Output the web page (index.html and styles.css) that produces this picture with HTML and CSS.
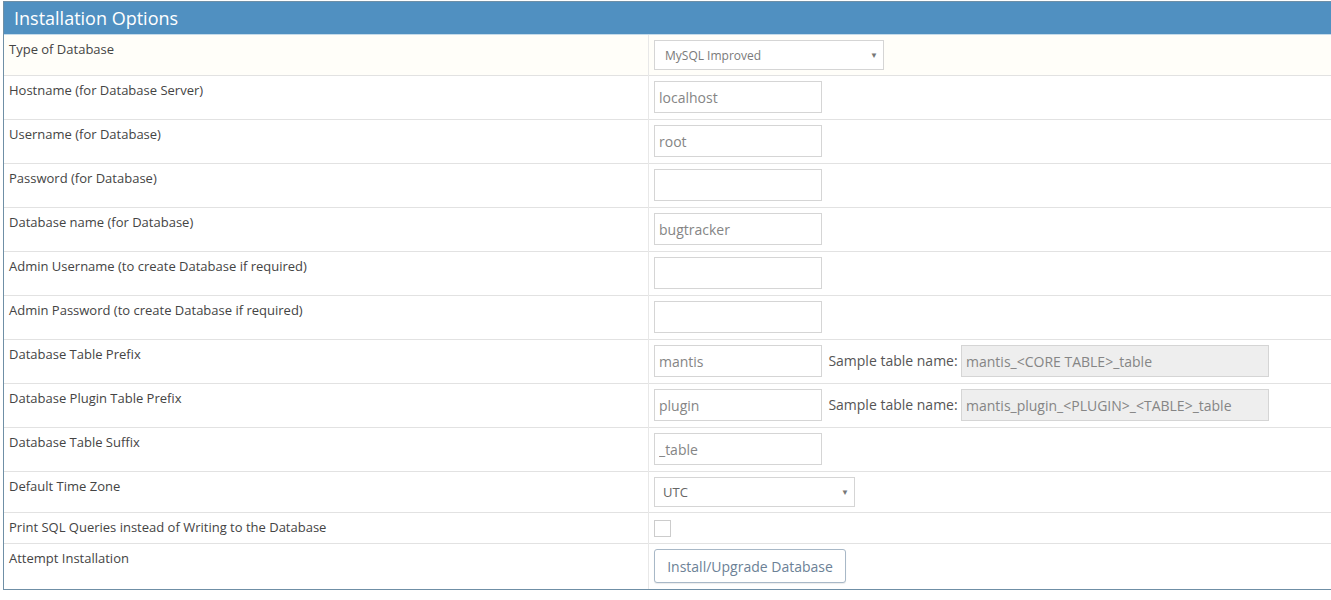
FILE: index.html
```html
<!DOCTYPE html>
<html>
<head>
<meta charset="UTF-8">
<title>Installation Options</title>
<link rel="stylesheet" href="styles.css">
</head>
<body>

<div class="widget-box">
	<div class="widget-header">
		<h4>Installation Options</h4>
	</div>
	<table class="options">
		<tr class="first">
			<td class="label">Type of Database</td>
			<td>
				<span class="select-wrap db-type">
					<select>
						<option>MySQL Improved</option>
					</select>
				</span>
			</td>
		</tr>
		<tr>
			<td class="label">Hostname (for Database Server)</td>
			<td><input type="text" value="localhost"></td>
		</tr>
		<tr>
			<td class="label">Username (for Database)</td>
			<td><input type="text" value="root"></td>
		</tr>
		<tr>
			<td class="label">Password (for Database)</td>
			<td><input type="password" value=""></td>
		</tr>
		<tr>
			<td class="label">Database name (for Database)</td>
			<td><input type="text" value="bugtracker"></td>
		</tr>
		<tr>
			<td class="label">Admin Username (to create Database if required)</td>
			<td><input type="text" value=""></td>
		</tr>
		<tr>
			<td class="label">Admin Password (to create Database if required)</td>
			<td><input type="password" value=""></td>
		</tr>
		<tr>
			<td class="label">Database Table Prefix</td>
			<td>
				<input type="text" value="mantis">
				<span class="sample">Sample table name:</span>
				<input type="text" class="sample-name" value="mantis_<CORE TABLE>_table" readonly>
			</td>
		</tr>
		<tr>
			<td class="label">Database Plugin Table Prefix</td>
			<td>
				<input type="text" value="plugin">
				<span class="sample">Sample table name:</span>
				<input type="text" class="sample-name" value="mantis_plugin_<PLUGIN>_<TABLE>_table" readonly>
			</td>
		</tr>
		<tr>
			<td class="label">Database Table Suffix</td>
			<td><input type="text" value="_table"></td>
		</tr>
		<tr class="select-row">
			<td class="label">Default Time Zone</td>
			<td>
				<span class="select-wrap timezone">
					<select>
						<option>UTC</option>
					</select>
				</span>
			</td>
		</tr>
		<tr class="check-row">
			<td class="label">Print SQL Queries instead of Writing to the Database</td>
			<td><span class="checkbox"></span></td>
		</tr>
		<tr class="last">
			<td class="label">Attempt Installation</td>
			<td><button type="button" class="btn">Install/Upgrade Database</button></td>
		</tr>
	</table>
</div>

</body>
</html>
```

FILE: styles.css
```css
html, body {
	background: #FFF;
	margin: 0;
	overflow: hidden;
	padding: 0;
}
body {
	color: #393939;
	font-family: "Open Sans", "Liberation Sans", sans-serif;
	font-size: 13px;
	padding: 1px 0 0 3px;
}
.widget-box {
	border: 1px solid #6f8fa6;
	border-right: none;
	margin-right: -20px;
}
.widget-header {
	background: #5090C1;
	border-bottom: 1px solid #c5dbea;
	height: 32px;
}
.widget-header h4 {
	color: #FFF;
	font-size: 18px;
	font-weight: normal;
	line-height: 32px;
	margin: 0;
	padding-left: 10px;
}
.options {
	border-collapse: collapse;
	width: 100%;
}
.options td {
	border-top: 1px solid #e2e2e2;
	line-height: 18px;
	padding: 5px 6px 6px 5px;
	vertical-align: top;
}
.options tr.first td {
	background: #fffef9;
	border-top: none;
	padding-bottom: 5px;
}
.options td.label {
	border-right: 1px solid #e8e8e8;
	color: #444;
	width: 633px;
}
.options tr.select-row td, .options tr.check-row td {
	padding-bottom: 5px;
}
input[type=text], input[type=password] {
	border: 1px solid #d5d5d5;
	box-sizing: border-box;
	color: #858585;
	font-family: "Open Sans", "Liberation Sans", sans-serif;
	font-size: 14px;
	height: 32px;
	margin: 0;
	padding: 0 4px;
	vertical-align: middle;
	width: 168px;
}
.sample {
	color: #555;
	font-size: 14px;
	margin: 0 0 0 3px;
	vertical-align: middle;
}
input.sample-name {
	background: #eee;
	width: 308px;
}
.select-wrap {
	display: inline-block;
	position: relative;
	vertical-align: top;
}
.select-wrap select {
	-webkit-appearance: none;
	appearance: none;
	background: #FFF;
	border: 1px solid #d5d5d5;
	border-radius: 0;
	box-sizing: border-box;
	color: #7a7a7a;
	display: block;
	font-family: "Open Sans", "Liberation Sans", sans-serif;
	font-size: 12px;
	height: 30px;
	margin: 0;
	padding: 0 8px 0 10px;
}
.select-wrap:after {
	color: #777;
	content: "\25BC";
	font-size: 8px;
	line-height: 8px;
	position: absolute;
	right: 6px;
	top: 11px;
}
.db-type select {
	width: 230px;
}
.timezone select {
	color: #666;
	font-size: 13px;
	padding-left: 8px;
	width: 201px;
}
.checkbox {
	border: 1px solid #ccc;
	box-sizing: border-box;
	display: block;
	height: 17px;
	margin: 2px 0 1px;
	width: 17px;
}
.btn {
	background: #FFF;
	border: 1px solid #a8b8c7;
	border-radius: 3px;
	box-shadow: 0 1px 1px rgba(0, 0, 0, .08);
	color: #6c8196;
	cursor: pointer;
	font-family: "Open Sans", "Liberation Sans", sans-serif;
	font-size: 14px;
	height: 34px;
	margin: 0;
	padding: 0 12px;
	width: 192px;
}
```
